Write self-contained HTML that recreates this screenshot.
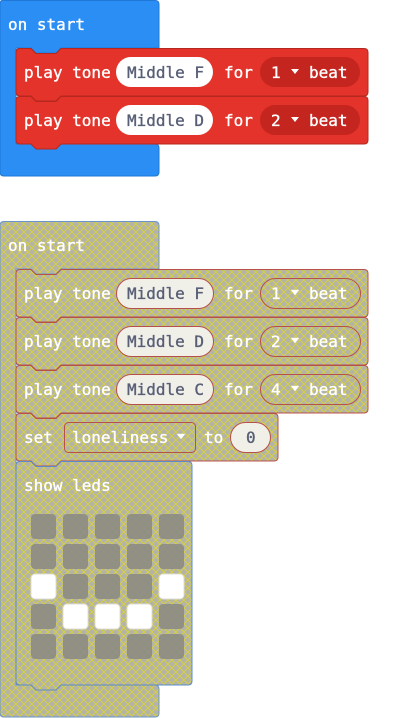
<!DOCTYPE html>
<html><head><meta charset="utf-8"><style>
html,body{margin:0;padding:0;background:#fff;width:420px;height:718px;overflow:hidden}
svg text{font-family:"DejaVu Sans Mono","Liberation Mono",monospace;font-size:16px}
.w{stroke:#fff;stroke-width:0.35}
.g{stroke:#575e75;stroke-width:0.35}
</style></head><body>
<svg width="420" height="718" viewBox="0 0 420 718" xmlns="http://www.w3.org/2000/svg">
<defs>
<pattern id="h" width="8" height="8" patternUnits="userSpaceOnUse">
<rect width="8" height="8" fill="#b3b3aa"/>
<path d="M-1,1 L1,-1 M0,8 L8,0 M7,9 L9,7 M-1,7 L1,9 M0,0 L8,8 M7,-1 L9,1" stroke="#d6d040" stroke-width="1"/>
</pattern>
</defs>

<!-- TOP -->
<path d="M4,0.5 H155 q4,0 4,4 V48 H61 l-5,5 h-20 l-5,-5 H16 V144 H155 q4,0 4,4 V172 q0,4 -4,4 H4 q-4,0 -4,-4 V4 q0,-4 4,-4 Z" fill="#2b8ef5" stroke="#1f78d6"/>
<text x="8" y="30" fill="#fff" class="w">on start</text>

<path d="M20,48.5 H31 l5,5 h20 l5,-5 H364 q4,0 4,4 V92 q0,4 -4,4 H61 l-5,5 h-20 l-5,-5 H20 q-4,0 -4,-4 V52.5 q0,-4 4,-4 Z" fill="#e4332a" stroke="#b52820"/>
<text x="24" y="78" fill="#fff" class="w">play tone</text>
<rect x="116" y="57" width="97" height="30" rx="15" fill="#fff"/>
<text x="127" y="78" fill="#575e75" class="g">Middle F</text>
<text x="224" y="78" fill="#fff" class="w">for</text>
<rect x="260" y="57" width="100" height="30" rx="15" fill="#c4261f"/>
<text x="271" y="78" fill="#fff" class="w">1</text><path d="M291,69 h8 l-4,5 z" fill="#fff"/><text x="309" y="78" fill="#fff" class="w">beat</text>

<path d="M20,96.5 H31 l5,5 h20 l5,-5 H364 q4,0 4,4 V140 q0,4 -4,4 H61 l-5,5 h-20 l-5,-5 H20 q-4,0 -4,-4 V100.5 q0,-4 4,-4 Z" fill="#e4332a" stroke="#b52820"/>
<text x="24" y="126" fill="#fff" class="w">play tone</text>
<rect x="116" y="105" width="97" height="30" rx="15" fill="#fff"/>
<text x="127" y="126" fill="#575e75" class="g">Middle D</text>
<text x="224" y="126" fill="#fff" class="w">for</text>
<rect x="260" y="105" width="100" height="30" rx="15" fill="#c4261f"/>
<text x="271" y="126" fill="#fff" class="w">2</text><path d="M291,117 h8 l-4,5 z" fill="#fff"/><text x="309" y="126" fill="#fff" class="w">beat</text>

<!-- BOTTOM -->
<path d="M4,221.5 H155 q4,0 4,4 V269 H61 l-5,5 h-20 l-5,-5 H16 V685 H155 q4,0 4,4 V713 q0,4 -4,4 H4 q-4,0 -4,-4 V225.5 q0,-4 4,-4 Z" fill="url(#h)" stroke="#6a94c8"/>
<text x="8" y="251" fill="#fff" class="w">on start</text>

<g fill="url(#h)" stroke="#b8504a">
<path d="M20,269.5 H31 l5,5 h20 l5,-5 H364 q4,0 4,4 V313 q0,4 -4,4 H61 l-5,5 h-20 l-5,-5 H20 q-4,0 -4,-4 V273.5 q0,-4 4,-4 Z"/>
<path d="M20,317.5 H31 l5,5 h20 l5,-5 H364 q4,0 4,4 V361 q0,4 -4,4 H61 l-5,5 h-20 l-5,-5 H20 q-4,0 -4,-4 V321.5 q0,-4 4,-4 Z"/>
<path d="M20,365.5 H31 l5,5 h20 l5,-5 H364 q4,0 4,4 V409 q0,4 -4,4 H61 l-5,5 h-20 l-5,-5 H20 q-4,0 -4,-4 V369.5 q0,-4 4,-4 Z"/>
<path d="M20,413.5 H31 l5,5 h20 l5,-5 H274 q4,0 4,4 V457 q0,4 -4,4 H61 l-5,5 h-20 l-5,-5 H20 q-4,0 -4,-4 V417.5 q0,-4 4,-4 Z"/>
</g>
<g fill="#f0efe8" stroke="#b8504a">
<rect x="116.5" y="278.5" width="97" height="30" rx="15"/>
<rect x="116.5" y="326.5" width="97" height="30" rx="15"/>
<rect x="116.5" y="374.5" width="97" height="30" rx="15"/>
<rect x="230.5" y="422.5" width="40" height="30" rx="15"/>
</g>
<g fill="none" stroke="#b8504a">
<rect x="260.5" y="278.5" width="100" height="30" rx="15"/>
<rect x="260.5" y="326.5" width="100" height="30" rx="15"/>
<rect x="260.5" y="374.5" width="100" height="30" rx="15"/>
<rect x="64.5" y="422.5" width="131" height="30" rx="4"/>
</g>
<g fill="#fff" stroke="#fff" stroke-width="0.35">
<text x="24" y="299">play tone</text><text x="224" y="299">for</text><text x="271" y="299">1</text><path d="M291,290 h8 l-4,5 z"/><text x="309" y="299">beat</text>
<text x="24" y="347">play tone</text><text x="224" y="347">for</text><text x="271" y="347">2</text><path d="M291,338 h8 l-4,5 z"/><text x="309" y="347">beat</text>
<text x="24" y="395">play tone</text><text x="224" y="395">for</text><text x="271" y="395">4</text><path d="M291,386 h8 l-4,5 z"/><text x="309" y="395">beat</text>
<text x="24" y="443">set</text><text x="72" y="443">loneliness</text><path d="M177,434 h8 l-4,5 z"/><text x="204" y="443">to</text>
</g>
<g fill="#575e75" stroke="#575e75" stroke-width="0.35">
<text x="127" y="299">Middle F</text>
<text x="127" y="347">Middle D</text>
<text x="127" y="395">Middle C</text>
<text x="246" y="443">0</text>
</g>

<path d="M20,461.5 H31 l5,5 h20 l5,-5 H188 q4,0 4,4 V681 q0,4 -4,4 H61 l-5,5 h-20 l-5,-5 H20 q-4,0 -4,-4 V465.5 q0,-4 4,-4 Z" fill="url(#h)" stroke="#5b8bc8"/>
<text x="24" y="491" fill="#fff" class="w">show leds</text>

<g fill="#8c8c84" opacity="0.9">
<rect x="31" y="514" width="25" height="25" rx="4"/><rect x="63" y="514" width="25" height="25" rx="4"/><rect x="95" y="514" width="25" height="25" rx="4"/><rect x="127" y="514" width="25" height="25" rx="4"/><rect x="159" y="514" width="25" height="25" rx="4"/>
<rect x="31" y="544" width="25" height="25" rx="4"/><rect x="63" y="544" width="25" height="25" rx="4"/><rect x="95" y="544" width="25" height="25" rx="4"/><rect x="127" y="544" width="25" height="25" rx="4"/><rect x="159" y="544" width="25" height="25" rx="4"/>
<rect x="63" y="574" width="25" height="25" rx="4"/><rect x="95" y="574" width="25" height="25" rx="4"/><rect x="127" y="574" width="25" height="25" rx="4"/>
<rect x="31" y="604" width="25" height="25" rx="4"/><rect x="159" y="604" width="25" height="25" rx="4"/>
<rect x="31" y="634" width="25" height="25" rx="4"/><rect x="63" y="634" width="25" height="25" rx="4"/><rect x="95" y="634" width="25" height="25" rx="4"/><rect x="127" y="634" width="25" height="25" rx="4"/><rect x="159" y="634" width="25" height="25" rx="4"/>
</g>
<g fill="#fff" stroke="#dcdcd4">
<rect x="31" y="574" width="25" height="25" rx="4"/><rect x="159" y="574" width="25" height="25" rx="4"/>
<rect x="63" y="604" width="25" height="25" rx="4"/><rect x="95" y="604" width="25" height="25" rx="4"/><rect x="127" y="604" width="25" height="25" rx="4"/>
</g>
</svg>
</body></html>
